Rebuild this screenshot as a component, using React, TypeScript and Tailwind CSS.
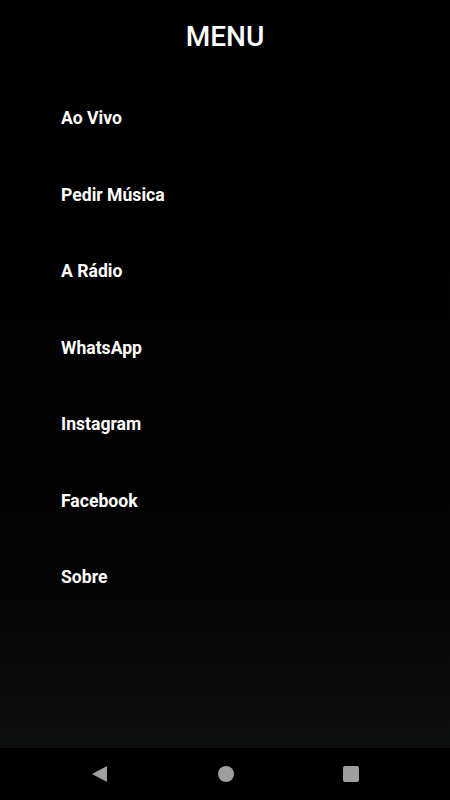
import React from "react";

const items = ["Ao Vivo", "Pedir Música", "A Rádio", "WhatsApp", "Instagram", "Facebook", "Sobre"];

export default function App() {
  return (
    <div className="w-[450px] h-[800px] flex flex-col bg-black text-white" style={{ fontFamily: "Roboto, 'Liberation Sans', sans-serif" }}>
      <div className="flex-1 flex flex-col bg-[linear-gradient(to_bottom,#000000_0%,#020202_60%,#050505_80%,#0d0e0e_100%)]">
        <div className="h-[74px] flex items-center justify-center">
          <h1 className="text-[28px] font-medium leading-none">MENU</h1>
        </div>
        <ul className="flex flex-col px-[61px] pt-[7px]">
          {items.map((t) => (
            <li key={t} className="h-[76.5px] flex items-center text-[17.6px] font-bold leading-none">
              {t}
            </li>
          ))}
        </ul>
      </div>
      <div className="h-[52px] bg-black flex items-center justify-between px-[91px]">
        <svg width="17" height="18" viewBox="0 0 17 18"><path d="M16 1 L1 9 L16 17 Z" fill="#9e9e9e" /></svg>
        <div className="w-[16px] h-[16px] rounded-full bg-[#9e9e9e]" />
        <div className="w-[16px] h-[16px] rounded-[2px] bg-[#9e9e9e]" />
      </div>
    </div>
  );
}
